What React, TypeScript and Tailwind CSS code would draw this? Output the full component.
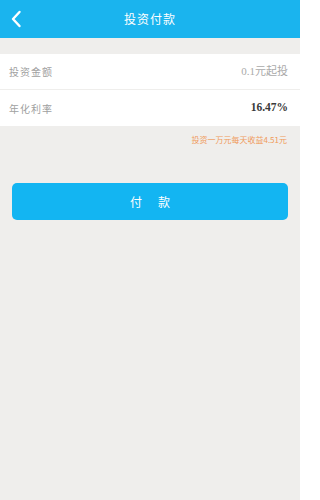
const ChevronLeft = () => (
  <svg width="12" height="18" viewBox="0 0 12 18" fill="none">
    <path d="M9.5 2 L3 9 L9.5 16" stroke="white" strokeWidth="2.4" strokeLinecap="round" strokeLinejoin="round" />
  </svg>
);

const App = () => {
  return (
    <div
      className="w-[300px] h-[500px] bg-[#efeeec] flex flex-col"
      style={{ fontFamily: '"Noto Sans CJK SC", "Liberation Sans", sans-serif' }}
    >
      {/* header */}
      <div className="h-[38px] bg-[#1ab4ee] flex items-center relative shrink-0">
        <div className="pl-[10px] flex items-center">
          <ChevronLeft />
        </div>
        <div className="absolute inset-0 flex items-center justify-center text-white text-[12px] tracking-[1px]">
          投资付款
        </div>
      </div>

      <div className="h-[16px]" />

      {/* info rows */}
      <div className="bg-white">
        <div className="h-[36px] flex items-center justify-between px-[9px] border-b border-[#efeeec]">
          <span className="text-[10px] text-[#a0a0a0] tracking-[1px]">投资金额</span>
          <span className="text-[11px] text-[#aaa] mr-[3px]" style={{ fontFamily: '"Liberation Serif", "Noto Sans CJK SC", serif' }}>0.1元起投</span>
        </div>
        <div className="h-[36px] flex items-center justify-between px-[9px]">
          <span className="text-[10px] text-[#a0a0a0] tracking-[1px]">年化利率</span>
          <span className="text-[11.5px] text-[#3a3a3a] mr-[3px] font-semibold" style={{ fontFamily: '"Liberation Serif", serif' }}>16.47%</span>
        </div>
      </div>

      <div className="flex justify-end pr-[13px] pt-[9px]">
        <span className="text-[8px] leading-[10px] text-[#ef9a5a]">投资一万元每天收益4.51元</span>
      </div>

      <div className="px-[12px] mt-[38px]">
        <button className="w-full h-[37px] rounded-[5px] bg-[#13b5f2] text-white text-[12px] tracking-[16px] pl-[16px]">
          付款
        </button>
      </div>
    </div>
  );
};

export default App;
